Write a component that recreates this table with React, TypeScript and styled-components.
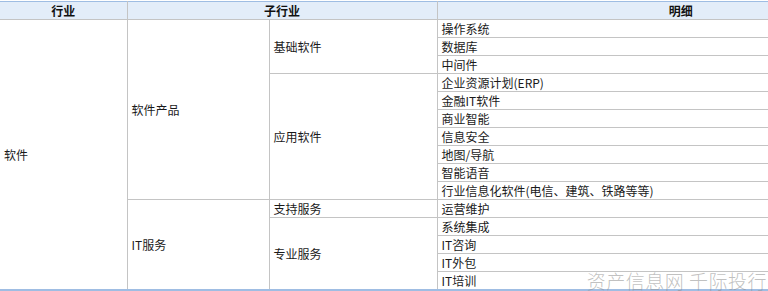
import styled, { createGlobalStyle } from "styled-components";

const GlobalStyle = createGlobalStyle`
  html, body {
    margin: 0;
    padding: 0;
    background: #ffffff;
    overflow: hidden;
  }
  body {
    font-family: "Noto Sans CJK SC", "Noto Sans", sans-serif;
  }
`;

const Page = styled.div`
  position: relative;
  width: 768px;
  height: 291px;
  overflow: hidden;
  padding-top: 1px;
  box-sizing: border-box;
`;

const Table = styled.table`
  border-collapse: collapse;
  table-layout: fixed;
  width: 925px;
  font-size: 12px;
  color: #1a1a1a;
  border-top: 1px solid #9fbde3;
  border-bottom: 2px solid #9fbde3;
`;

const HeadCell = styled.th`
  height: 17px;
  padding: 0;
  background: #e3edf9;
  border: 1px solid #c4c4c4;
  border-top: none;
  font-weight: 700;
  line-height: 17px;
  text-align: center;
  color: #111;
  &:first-child {
    border-left: none;
  }
`;

const Cell = styled.td<{ $first?: boolean }>`
  height: 17px;
  padding: 0 4px;
  border: 1px solid #c4c4c4;
  border-left: ${(p) => (p.$first ? "none" : "1px solid #c4c4c4")};
  line-height: 17px;
  vertical-align: middle;
  white-space: nowrap;
`;

const Watermark = styled.div`
  position: absolute;
  right: 1px;
  bottom: 0;
  font-size: 19px;
  line-height: 21px;
  letter-spacing: 0.5px;
  font-weight: 300;
  color: rgba(140, 140, 140, 0.55);
  white-space: nowrap;
  pointer-events: none;
`;

type Group = { name: string; items: string[] };
type Sub = { name: string; groups: Group[] };

const data: Sub[] = [
  {
    name: "软件产品",
    groups: [
      { name: "基础软件", items: ["操作系统", "数据库", "中间件"] },
      {
        name: "应用软件",
        items: [
          "企业资源计划(ERP)",
          "金融IT软件",
          "商业智能",
          "信息安全",
          "地图/导航",
          "智能语音",
          "行业信息化软件(电信、建筑、铁路等等)",
        ],
      },
    ],
  },
  {
    name: "IT服务",
    groups: [
      { name: "支持服务", items: ["运营维护"] },
      { name: "专业服务", items: ["系统集成", "IT咨询", "IT外包", "IT培训"] },
    ],
  },
];

const total = data.reduce(
  (n, s) => n + s.groups.reduce((m, g) => m + g.items.length, 0),
  0
);

export default function App() {
  const rows: JSX.Element[] = [];
  let firstRow = true;
  data.forEach((sub, si) => {
    const subCount = sub.groups.reduce((m, g) => m + g.items.length, 0);
    sub.groups.forEach((group, gi) => {
      group.items.forEach((item, ii) => {
        rows.push(
          <tr key={`${si}-${gi}-${ii}`}>
            {firstRow && (
              <Cell $first rowSpan={total}>
                软件
              </Cell>
            )}
            {gi === 0 && ii === 0 && <Cell rowSpan={subCount}>{sub.name}</Cell>}
            {ii === 0 && <Cell rowSpan={group.items.length}>{group.name}</Cell>}
            <Cell>{item}</Cell>
          </tr>
        );
        firstRow = false;
      });
    });
  });

  return (
    <>
      <GlobalStyle />
      <Page>
        <Table>
          <colgroup>
            <col style={{ width: 127 }} />
            <col style={{ width: 142 }} />
            <col style={{ width: 168 }} />
            <col />
          </colgroup>
          <thead>
            <tr>
              <HeadCell>行业</HeadCell>
              <HeadCell colSpan={2}>子行业</HeadCell>
              <HeadCell>明细</HeadCell>
            </tr>
          </thead>
          <tbody>{rows}</tbody>
        </Table>
        <Watermark>资产信息网 千际投行</Watermark>
      </Page>
    </>
  );
}
